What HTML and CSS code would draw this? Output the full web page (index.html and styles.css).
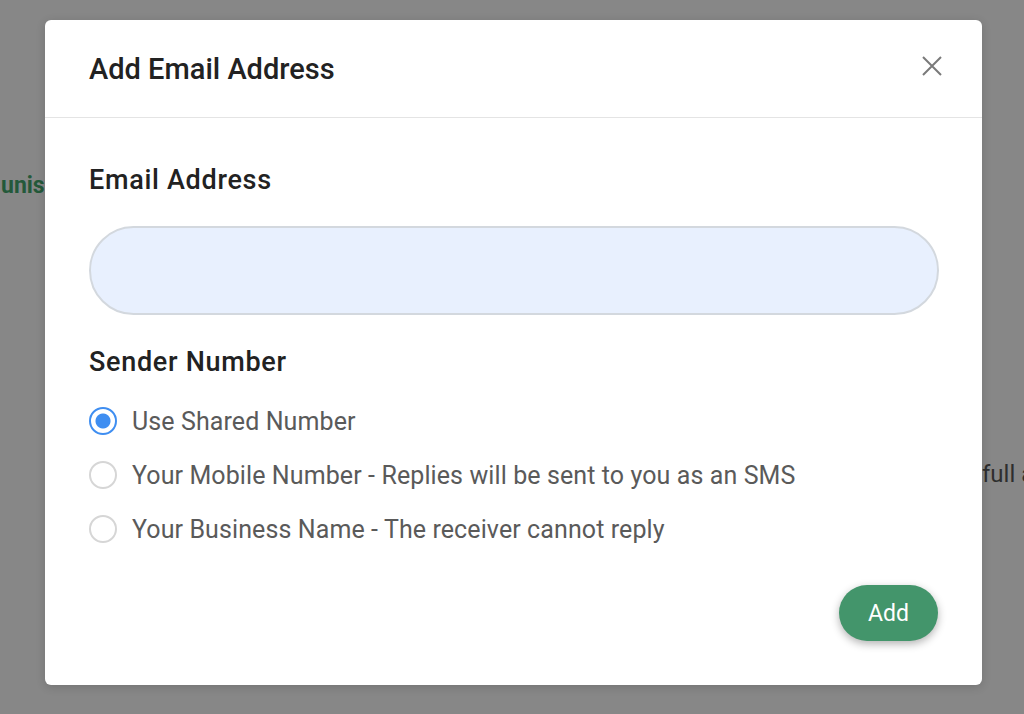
FILE: index.html
```html
<!DOCTYPE html>
<html lang="en">
<head>
    <meta charset="UTF-8">
    <title>Add Email Address</title>
    <link rel="stylesheet" href="styles.css">
</head>
<body>
    <div class="page">
        <p class="page-link">unis</p>
        <p class="page-text">full a</p>
    </div>

    <div class="modal">
        <div class="modal-header">
            <h2>Add Email Address</h2>
            <button type="button" class="close" aria-label="Close">
                <svg width="20" height="20" viewBox="0 0 20 20">
                    <path d="M1 1 L19 19 M19 1 L1 19" stroke="#7a7a7a" stroke-width="2" fill="none"/>
                </svg>
            </button>
        </div>
        <form class="modal-body">
            <label for="email" class="field-label">Email Address</label>
            <input type="email" id="email" class="email-input">

            <h3 class="field-label">Sender Number</h3>
            <label class="radio">
                <input type="radio" name="sender" checked>
                <span class="dot"></span>
                Use Shared Number
            </label>
            <label class="radio">
                <input type="radio" name="sender">
                <span class="dot"></span>
                Your Mobile Number - Replies will be sent to you as an SMS
            </label>
            <label class="radio">
                <input type="radio" name="sender">
                <span class="dot"></span>
                Your Business Name - The receiver cannot reply
            </label>

            <div class="actions">
                <button type="button" class="add">Add</button>
            </div>
        </form>
    </div>
</body>
</html>
```

FILE: styles.css
```css
body {
    margin: 0;
    height: 714px;
    overflow: hidden;
    background-color: #878787;
    font-family: Roboto, "Liberation Sans", sans-serif;
}

.page {
    height: 714px;
    white-space: nowrap;
}

.page-link {
    margin: 0;
    padding-top: 171px;
    padding-left: 1px;
    font-size: 23px;
    line-height: 30px;
    font-weight: 700;
    color: #24593a;
}

.page-text {
    margin: 0;
    padding-top: 258px;
    padding-left: 982px;
    font-size: 24px;
    line-height: 30px;
    color: #2e2e2e;
}

.modal {
    position: absolute;
    left: 45px;
    top: 20px;
    width: 937px;
    height: 665px;
    background-color: #fff;
    border-radius: 6px;
    box-shadow: 0 2px 10px rgba(0, 0, 0, 0.15);
}

.modal-header {
    display: flex;
    align-items: center;
    justify-content: space-between;
    height: 97px;
    padding: 0 40px 0 44px;
    border-bottom: 1px solid #e4e4e4;
}

.modal-header h2 {
    margin: 0;
    font-size: 29px;
    font-weight: 500;
    color: #222;
}

.close {
    background: none;
    border: none;
    padding: 0;
    margin-bottom: 6px;
    cursor: pointer;
    display: flex;
}

.modal-body {
    padding: 46px 44px 0 44px;
}

.field-label {
    display: block;
    margin: 0;
    font-size: 27px;
    line-height: 32px;
    letter-spacing: 0.7px;
    font-weight: 500;
    color: #222;
}

.email-input {
    display: block;
    box-sizing: border-box;
    width: 850px;
    height: 89px;
    margin: 30px 0 31px 0;
    background-color: #e8f0fe;
    border: 2px solid #d3d8de;
    border-radius: 45px;
}

.radio {
    display: flex;
    align-items: center;
    gap: 15px;
    height: 54px;
    font-size: 25px;
    letter-spacing: 0.1px;
    color: #5a5a5a;
    cursor: pointer;
}

.field-label + .radio {
    margin-top: 16px;
}

.radio input {
    display: none;
}

.dot {
    box-sizing: border-box;
    width: 28px;
    height: 28px;
    border: 2px solid #d6d6d6;
    border-radius: 50%;
}

.radio input:checked + .dot {
    border-color: #3f8ef1;
    background: radial-gradient(circle, #3f8ef1 0 7px, #fff 8px);
}

.actions {
    display: flex;
    justify-content: flex-end;
    margin-top: 29px;
}

.add {
    width: 99px;
    height: 56px;
    background-color: #43956b;
    color: #fff;
    border: none;
    border-radius: 28px;
    font-family: Roboto, "Liberation Sans", sans-serif;
    font-size: 23px;
    box-shadow: 0 3px 8px rgba(0, 0, 0, 0.3);
    cursor: pointer;
}
```
